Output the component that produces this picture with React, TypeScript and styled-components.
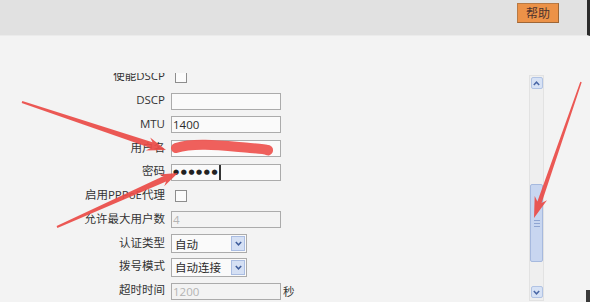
import React from "react";
import styled, { createGlobalStyle } from "styled-components";

const Global = createGlobalStyle`
  html, body { margin: 0; padding: 0; }
  body {
    width: 590px;
    height: 302px;
    overflow: hidden;
    background: #f3f3f3;
    font-family: "Open Sans", "Noto Sans CJK SC", sans-serif;
  }
`;

const Page = styled.div`
  position: relative;
  width: 590px;
  height: 302px;
  background: #f3f3f3;
  overflow: hidden;
`;

const Header = styled.div`
  height: 36px;
  box-sizing: border-box;
  background: #e1e1e1;
  border-bottom: 1px solid #ebebeb;
  border-right: 3px solid #2b2b2b;
  display: flex;
  justify-content: flex-end;
  align-items: flex-start;
  padding: 3px 28px 0 0;
`;

const HelpButton = styled.button`
  width: 42px;
  height: 20px;
  box-sizing: border-box;
  background: #ec9248;
  border: 1px solid #b87a45;
  border-right-color: #9e6636;
  border-bottom-color: #9e6636;
  color: #4e332d;
  font-family: "Noto Sans CJK SC", sans-serif;
  font-size: 12px;
  line-height: 16px;
  padding: 0;
  margin: 0;
`;

const Body = styled.div`
  display: flex;
  height: 266px;
`;

const Viewport = styled.div`
  flex: 1;
  margin-top: 37px;
  height: 229px;
  overflow: hidden;
`;

const FormList = styled.div`
  margin-top: -7.5px;
  display: flex;
  flex-direction: column;
`;

const Row = styled.div`
  height: 23.75px;
  display: grid;
  grid-template-columns: 165px auto;
  column-gap: 6px;
  align-items: center;
`;

const Label = styled.div`
  text-align: right;
  font-size: 11.5px;
  color: #333;
  white-space: nowrap;
  line-height: 14px;
  padding-bottom: 2px;
`;

const Control = styled.div`
  display: flex;
  align-items: center;
  gap: 2px;
`;

const TextBox = styled.div<{ $disabled?: boolean }>`
  width: 110px;
  height: 17px;
  box-sizing: border-box;
  border: 1px solid #ababab;
  background: ${(p) => (p.$disabled ? "#f3f3f3" : "#fafafa")};
  color: ${(p) => (p.$disabled ? "#b4b4b4" : "#2a2a2a")};
  font-size: 11.5px;
  line-height: 15px;
  padding-left: 1px;
  display: flex;
  align-items: center;
  overflow: hidden;
`;

const Dots = styled.span`
  font-family: "DejaVu Sans", sans-serif;
  font-size: 7px;
  letter-spacing: 1.6px;
  color: #222;
  line-height: 15px;
`;

const Caret = styled.span`
  width: 2px;
  height: 15px;
  background: #333;
`;

const Check = styled.div`
  width: 12px;
  height: 12px;
  box-sizing: border-box;
  border: 1px solid #8d8d8d;
  background: #fbfbfb;
  margin-left: 4px;
`;

const Select = styled.div`
  width: 76px;
  height: 19px;
  box-sizing: border-box;
  border: 1px solid #ababab;
  background: #fafafa;
  display: flex;
  align-items: center;
  justify-content: space-between;
  font-size: 11.5px;
  color: #2a2a2a;
  padding: 0 1px 0 3px;
`;

const DropButton = styled.div`
  width: 14px;
  height: 15px;
  box-sizing: border-box;
  background: #d5e0f4;
  border: 1px solid #aabde2;
  display: flex;
  align-items: center;
  justify-content: center;
`;

const Unit = styled.span`
  font-size: 11.5px;
  color: #333;
`;

const ScrollTrack = styled.div`
  width: 15px;
  margin-top: 39px;
  height: 226px;
  box-sizing: border-box;
  background: #efefef;
  border: 1px solid #e2e2e2;
  display: flex;
  flex-direction: column;
  align-items: center;
  padding: 1px 0;
`;

const ScrollButton = styled.div`
  width: 12px;
  height: 12px;
  box-sizing: border-box;
  background: #d7e2f5;
  border: 1px solid #b1c3e4;
  border-radius: 2px;
  display: flex;
  align-items: center;
  justify-content: center;
`;

const TrackGap = styled.div<{ $h: number }>`
  height: ${(p) => p.$h}px;
`;

const Thumb = styled.div`
  width: 13px;
  height: 78px;
  box-sizing: border-box;
  background: #c8d6f0;
  border: 1px solid #a6b9de;
  border-radius: 2px;
  display: flex;
  flex-direction: column;
  align-items: center;
  justify-content: center;
  gap: 2px;
`;

const Grip = styled.div`
  width: 6px;
  height: 1px;
  background: #8fa5d2;
`;

const RightGutter = styled.div`
  width: 46px;
`;

const Overlay = styled.svg`
  position: absolute;
  left: 0;
  top: 0;
  pointer-events: none;
`;

const Corner = styled.div`
  position: absolute;
  right: 0;
  bottom: 0;
  width: 4px;
  height: 12px;
  background: #3a3a3a;
`;

function Chevron({ up, color }: { up?: boolean; color: string }) {
  return (
    <svg width="7" height="5" viewBox="0 0 7 5">
      <polyline
        points={up ? "0.8,4 3.5,1.2 6.2,4" : "0.8,1 3.5,3.8 6.2,1"}
        fill="none"
        stroke={color}
        strokeWidth="1.5"
      />
    </svg>
  );
}

function arrow(
  x0: number,
  y0: number,
  x1: number,
  y1: number,
  L: number,
  W: number,
  w0: number,
  w1: number
) {
  const dx = x1 - x0;
  const dy = y1 - y0;
  const len = Math.hypot(dx, dy);
  const ux = dx / len;
  const uy = dy / len;
  const px = -uy;
  const py = ux;
  const bx = x1 - ux * L;
  const by = y1 - uy * L;
  const nx = x1 - ux * (L * 0.8);
  const ny = y1 - uy * (L * 0.8);
  const pts = [
    [x0 + (px * w0) / 2, y0 + (py * w0) / 2],
    [nx + (px * w1) / 2, ny + (py * w1) / 2],
    [bx + (px * W) / 2, by + (py * W) / 2],
    [x1, y1],
    [bx - (px * W) / 2, by - (py * W) / 2],
    [nx - (px * w1) / 2, ny - (py * w1) / 2],
    [x0 - (px * w0) / 2, y0 - (py * w0) / 2],
  ];
  return pts.map((p) => `${p[0].toFixed(1)},${p[1].toFixed(1)}`).join(" ");
}

type Field =
  | { kind: "check"; label: string }
  | { kind: "text"; label: string; value?: string; disabled?: boolean; unit?: string }
  | { kind: "password"; label: string }
  | { kind: "select"; label: string; value: string };

const fields: Field[] = [
  { kind: "check", label: "使能DSCP" },
  { kind: "text", label: "DSCP" },
  { kind: "text", label: "MTU", value: "1400" },
  { kind: "text", label: "用户名" },
  { kind: "password", label: "密码" },
  { kind: "check", label: "启用PPPoE代理" },
  { kind: "text", label: "允许最大用户数", value: "4", disabled: true },
  { kind: "select", label: "认证类型", value: "自动" },
  { kind: "select", label: "拨号模式", value: "自动连接" },
  { kind: "text", label: "超时时间", value: "1200", disabled: true, unit: "秒" },
];

function renderControl(f: Field) {
  switch (f.kind) {
    case "check":
      return <Check />;
    case "password":
      return (
        <TextBox>
          <Dots>●●●●●●</Dots>
          <Caret />
        </TextBox>
      );
    case "select":
      return (
        <Select>
          <span>{f.value}</span>
          <DropButton>
            <Chevron color="#3f5d9c" />
          </DropButton>
        </Select>
      );
    default:
      return (
        <>
          <TextBox $disabled={f.disabled}>{f.value}</TextBox>
          {f.unit && <Unit>{f.unit}</Unit>}
        </>
      );
  }
}

export default function App() {
  const red = "#ea4b46";
  return (
    <Page>
      <Global />
      <Header>
        <HelpButton>帮助</HelpButton>
      </Header>
      <Body>
        <Viewport>
          <FormList>
            {fields.map((f) => (
              <Row key={f.label}>
                <Label>{f.label}</Label>
                <Control>{renderControl(f)}</Control>
              </Row>
            ))}
          </FormList>
        </Viewport>
        <ScrollTrack>
          <ScrollButton>
            <Chevron up color="#4a67a6" />
          </ScrollButton>
          <TrackGap $h={95} />
          <Thumb>
            <Grip />
            <Grip />
            <Grip />
          </Thumb>
          <TrackGap $h={24} />
          <ScrollButton>
            <Chevron color="#4a67a6" />
          </ScrollButton>
        </ScrollTrack>
        <RightGutter />
      </Body>
      <Overlay width="590" height="302" viewBox="0 0 590 302">
        <path
          d="M176 148 C 195 142, 225 146, 250 148 S 266 151, 268 150"
          fill="none"
          stroke="#ee5753"
          strokeWidth="10"
          strokeLinecap="round"
          opacity="0.95"
        />
        <polygon points={arrow(22, 102, 166, 150, 19, 14, 2, 6)} fill={red} opacity="0.92" />
        <polygon points={arrow(57, 227, 178, 173, 18, 13, 2, 6)} fill={red} opacity="0.92" />
        <polygon points={arrow(581, 82, 534, 218, 21, 13, 1.5, 4.5)} fill={red} opacity="0.92" />
      </Overlay>
      <Corner />
    </Page>
  );
}
